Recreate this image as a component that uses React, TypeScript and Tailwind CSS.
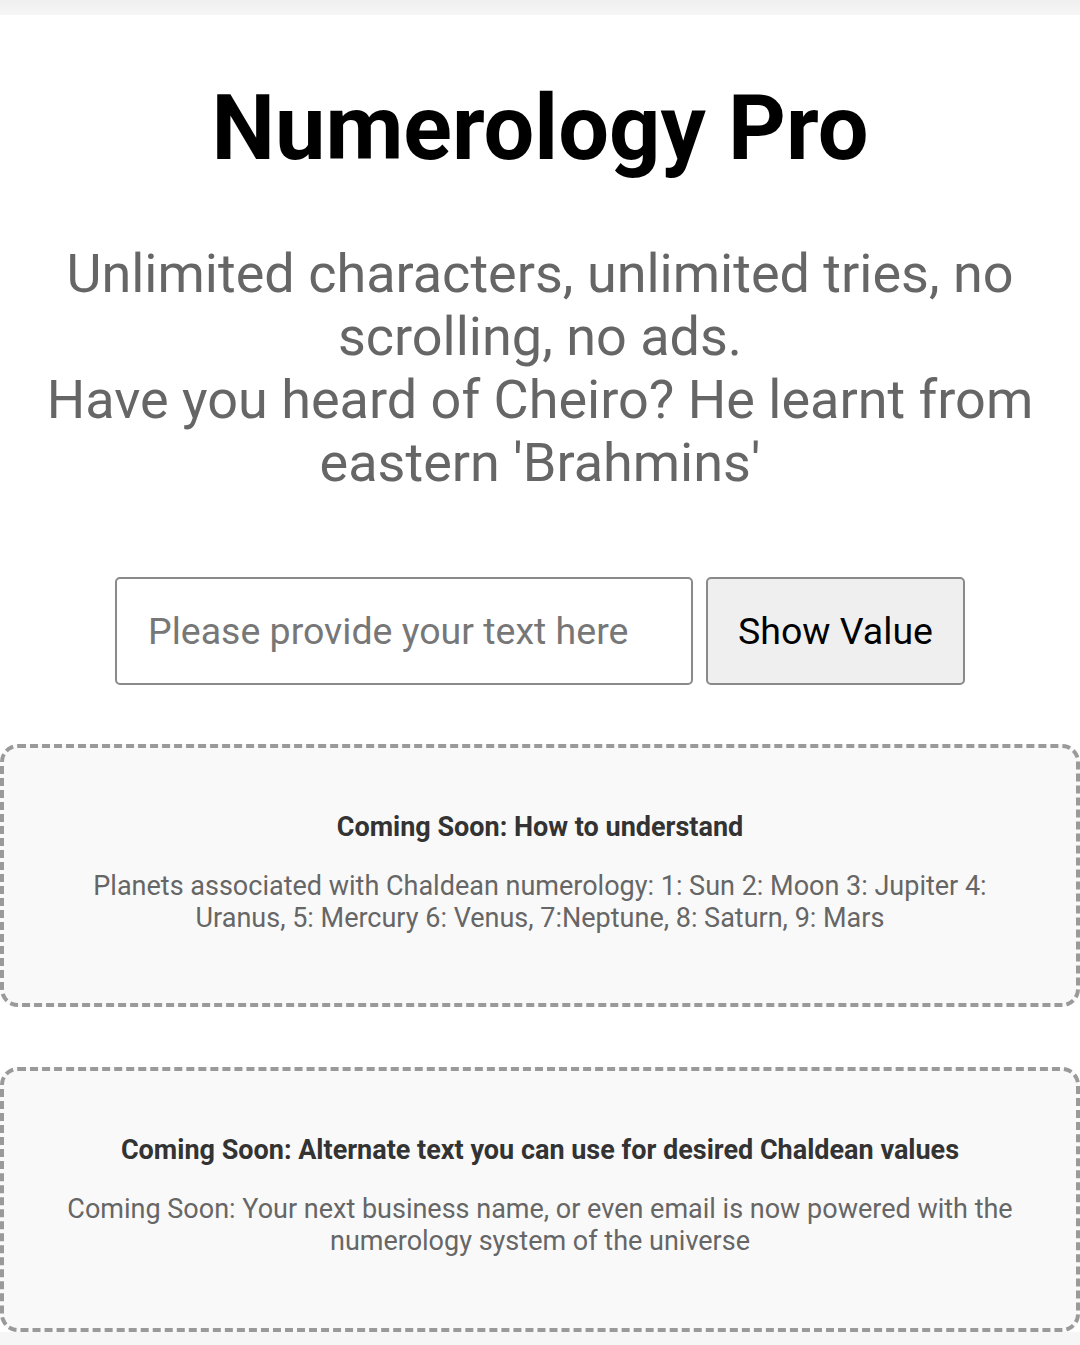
import React from "react";

export default function App() {
  return (
    <div className="w-[1080px] min-h-[1345px] bg-white flex flex-col font-['Roboto',sans-serif]">
      <div className="h-[15px] bg-gradient-to-b from-[#efefef] to-[#f7f7f7]" />
      <h1 className="mt-[60px] text-center text-[90px] leading-[107px] font-bold text-black">
        Numerology Pro
      </h1>
      <p className="mt-[60px] px-[30px] text-center text-[54px] leading-[63px] text-[#666666]">
        Unlimited characters, unlimited tries, no scrolling, no ads.
        <br />
        Have you heard of Cheiro? He learnt from eastern 'Brahmins'
      </p>
      <div className="mt-[83px] flex justify-center gap-[13px]">
        <input
          type="text"
          placeholder="Please provide your text here"
          className="w-[578px] h-[108px] border-2 border-[#8a8a8a] rounded-[5px] pl-[31px] text-[37.5px] text-black placeholder:text-[#777777] outline-none bg-white"
        />
        <button className="w-[259px] h-[108px] border-2 border-[#8a8a8a] rounded-[5px] bg-[#efefef] text-[37.5px] text-black">
          Show Value
        </button>
      </div>
      <div className="mt-[59px] flex flex-col gap-[60px]">
        <div className="border-[4px] border-dashed border-[#9a9a9a] rounded-[18px] bg-[#f9f9f9] px-[59px] pt-[63px] pb-[69px] text-center">
          <h3 className="text-[27px] leading-[32px] font-bold text-[#333333]">
            Coming Soon: How to understand
          </h3>
          <p className="mt-[27px] text-[27px] leading-[32px] text-[#666666]">
            Planets associated with Chaldean numerology: 1: Sun 2: Moon 3: Jupiter 4: Uranus, 5: Mercury 6: Venus, 7:Neptune, 8: Saturn, 9: Mars
          </p>
        </div>
        <div className="border-[4px] border-dashed border-[#9a9a9a] rounded-[18px] bg-[#f9f9f9] px-[59px] pt-[63px] pb-[71px] text-center">
          <h3 className="text-[27px] leading-[32px] font-bold text-[#333333]">
            Coming Soon: Alternate text you can use for desired Chaldean values
          </h3>
          <p className="mt-[27px] text-[27px] leading-[32px] text-[#666666]">
            Coming Soon: Your next business name, or even email is now powered with the numerology system of the universe
          </p>
        </div>
      </div>
      <div className="flex-1 bg-[#f6f6f6] min-h-[12px]" />
    </div>
  );
}
